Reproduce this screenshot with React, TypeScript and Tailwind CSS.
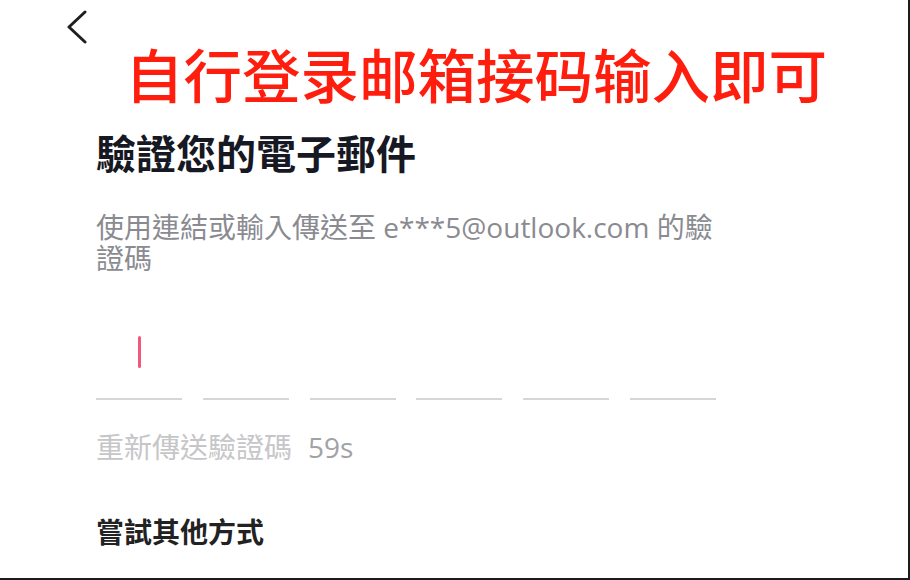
import React from 'react';

const cjk = "font-['Open_Sans','Noto_Sans_CJK_TC',sans-serif]";

const CodeInputs: React.FC = () => {
  const slots = [0, 1, 2, 3, 4, 5];
  return (
    <div className="mt-[36px] flex w-[620px] justify-between">
      {slots.map((i) => (
        <div
          key={i}
          className="flex h-[90px] w-[86px] items-end justify-center border-b-2 border-[#d6d6d6] pb-[30px]"
        >
          {i === 0 && <span className="block h-[32px] w-[3px] rounded-full bg-[#f4577c]" />}
        </div>
      ))}
    </div>
  );
};

const App: React.FC = () => {
  return (
    <div className="h-[580px] w-[910px] overflow-hidden border-r-2 border-b-2 border-[#1c1c1c] bg-white">
      <div className="pl-[66px] pt-[10px]">
        <svg width="22" height="34" viewBox="0 0 22 34" fill="none" stroke="#1f1f1f" strokeWidth={3} strokeLinecap="round" strokeLinejoin="round">
          <path d="M19 2 L3 17 L19 32" />
        </svg>
      </div>

      {/* annotation on top of the screenshot */}
      <div className="ml-[125px] mt-[0px] font-['Noto_Sans_CJK_SC',sans-serif] text-[58.5px] font-medium leading-none text-[#ff1e0e]">
        自行登录邮箱接码输入即可
      </div>

      <div className="pl-[96px]">
        <h1 className="mt-[29px] font-['Noto_Sans_CJK_TC',sans-serif] text-[40px] font-bold leading-none text-[#161823]">
          驗證您的電子郵件
        </h1>
        <p className={`mt-[40px] w-[625px] ${cjk} text-[28px] leading-[31px] text-[#8a8b91]`}>
          使用連結或輸入傳送至 e***5@outlook.com 的驗證碼
        </p>

        <CodeInputs />

        <div className={`mt-[32px] ${cjk} text-[28px] leading-[31px]`}>
          <span className="text-[#c6c6c8]">重新傳送驗證碼</span>
          <span className="ml-[16px] text-[#a2a2a6]">59s</span>
        </div>

        <div className={`mt-[54px] ${cjk} text-[28px] font-bold leading-[31px] text-[#222222]`}>
          嘗試其他方式
        </div>
      </div>
    </div>
  );
};

export default App;
